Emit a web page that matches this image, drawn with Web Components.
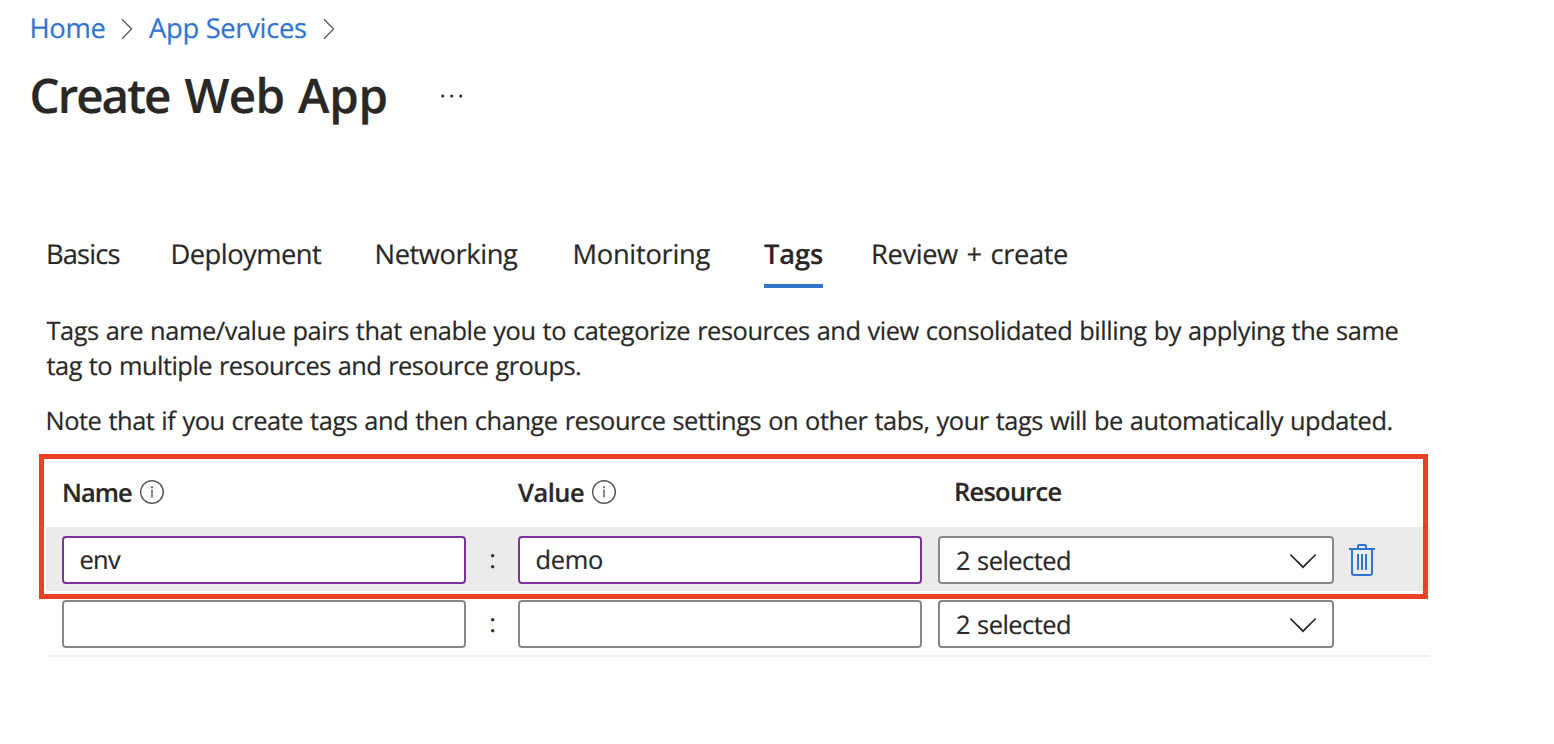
<!DOCTYPE html>
<html lang="en">
<head>
<meta charset="utf-8">
<title>Create Web App</title>
<style>
  html, body { margin: 0; background: #fff; }
  body { font-family: "Open Sans", "Noto Sans", sans-serif; color: #292827; overflow: hidden; text-rendering: geometricPrecision; -webkit-text-stroke: 0.2px currentColor; }
</style>
</head>
<body>
<web-app-page></web-app-page>

<script>
const define = (name, html, ready) => {
  const tpl = document.createElement('template');
  tpl.innerHTML = html;
  customElements.define(name, class extends HTMLElement {
    constructor() {
      super();
      this.attachShadow({ mode: 'open' }).append(tpl.content.cloneNode(true));
    }
    connectedCallback() { if (ready) ready.call(this, this.shadowRoot); }
  });
};

/* A single line of text whose tracking is adjusted to span a given width. */
const ctx = document.createElement('canvas').getContext('2d');
define('fit-text', `
  <style>
    :host { display: block; white-space: nowrap; flex: none; }
    span { display: block; }
  </style>
  <span><slot></slot></span>`,
  function (root) {
    const text = this.textContent;
    const width = parseFloat(this.getAttribute('width'));
    const word = parseFloat(this.getAttribute('word') || 0);
    const cs = getComputedStyle(this);
    ctx.font = `${cs.fontWeight} ${cs.fontSize} ${cs.fontFamily}`;
    ctx.textRendering = 'geometricPrecision';
    const m = ctx.measureText(text);
    const ink = m.actualBoundingBoxLeft + m.actualBoundingBoxRight + word * (text.split(' ').length - 1);
    this.style.width = width + 'px';
    const span = root.querySelector('span');
    span.style.wordSpacing = word + 'px';
    span.style.letterSpacing = (width - ink) / (text.length - 1) + 'px';
    span.style.marginLeft = m.actualBoundingBoxLeft + 'px';
  });

define('crumb-chevron', `
  <style>:host { display: block; width: 12px; height: 22px; } svg { display: block; }</style>
  <svg width="12" height="22" viewBox="0 0 12 22" fill="none" stroke="#5c5b5a" stroke-width="1.3"><path d="M1 1.2 10.6 11 1 20.8"/></svg>`);

define('crumb-trail', `
  <style>
    :host { display: flex; height: 36px; line-height: 36px; font-size: 27.4px; color: #3175cf; }
    crumb-chevron { margin-top: 7px; }
    .a { margin-left: 16px; margin-right: 16.5px; }
    .b { margin-left: 16.5px; }
  </style>
  <fit-text width="73">Home</fit-text><crumb-chevron class="a"></crumb-chevron>
  <fit-text width="157">App Services</fit-text><crumb-chevron class="b"></crumb-chevron>`);

define('page-title', `
  <style>
    :host { display: flex; height: 60px; }
    h1 { margin: 0; font-size: 47.5px; line-height: 60px; font-weight: 650; display: flex; gap: 14.5px; }
    svg { margin: 27px 0 0 53.5px; }
  </style>
  <h1><fit-text width="138.5">Create</fit-text> <fit-text width="99">Web</fit-text> <fit-text width="88.5">App</fit-text></h1>
  <svg width="26" height="8" viewBox="0 0 26 8" fill="#292827"><circle cx="2.7" cy="4" r="1.5"/><circle cx="11.7" cy="4" r="1.5"/><circle cx="20.7" cy="4" r="1.5"/></svg>`);

define('tab-item', `
  <style>
    :host { display: block; box-sizing: border-box; height: 53px; padding-top: 1px; font-size: 27.3px; line-height: 36px; flex: none; }
    :host([active]) { font-weight: 650; border-bottom: 4px solid #3175cf; }
  </style>
  <slot></slot>`);

define('tab-bar', `
  <style>
    :host { display: flex; height: 53px; padding-left: 2px; }
  </style>
  <tab-item style="margin-right:53px"><fit-text width="71.5">Basics</fit-text></tab-item>
  <tab-item style="margin-right:54.5px"><fit-text width="149.5">Deployment</fit-text></tab-item>
  <tab-item style="margin-right:56.5px"><fit-text width="141.5">Networking</fit-text></tab-item>
  <tab-item style="margin-right:53.5px"><fit-text width="136">Monitoring</fit-text></tab-item>
  <tab-item active style="margin-right:50px"><fit-text width="59">Tags</fit-text></tab-item>
  <tab-item><fit-text width="194" word="2">Review + create</fit-text></tab-item>`);

define('tag-notes', `
  <style>
    :host { display: block; font-size: 25.4px; line-height: 35px; }
    p { margin: 0 0 20px; }
    .n { padding-left: 1px; }
  </style>
  <p><fit-text width="1351" word="0.8">Tags are name/value pairs that enable you to categorize resources and view consolidated billing by applying the same</fit-text>
  <fit-text width="533.5" word="0.8">tag to multiple resources and resource groups.</fit-text></p>
  <p class="n"><fit-text width="1344" word="0.8">Note that if you create tags and then change resource settings on other tabs, your tags will be automatically updated.</fit-text></p>`);

define('info-icon', `
  <style>:host { display: block; width: 24px; height: 24px; } svg { display: block; }</style>
  <svg width="24" height="24" viewBox="0 0 24 24" fill="none" stroke="#555453"><circle cx="12" cy="12" r="11.3" stroke-width="1.4"/><path d="M12 9.6V17.6" stroke-width="1.4"/><circle cx="12" cy="7.2" r="1" fill="#555453" stroke="none"/></svg>`);

define('tag-head', `
  <style>
    :host { display: grid; grid-template-columns: 456px 436px 1fr; height: 68px; padding-left: 17px; font-size: 25.4px; line-height: 36px; font-weight: 650; box-sizing: border-box; }
    div { display: flex; padding-top: 16px; }
    info-icon { margin: 5px 0 0 8px; }
    .n { padding-left: 1px; }
    .r { padding-top: 15px; }
  </style>
  <div class="n"><fit-text width="68">Name</fit-text><info-icon></info-icon></div>
  <div style="margin-left:-1px"><fit-text width="66">Value</fit-text><info-icon></info-icon></div>
  <div class="r" style="margin-left:1px"><fit-text width="105.5">Resource</fit-text></div>`);

define('tag-field', `
  <style>
    :host { display: block; box-sizing: border-box; height: 48px; border: 2px solid #888786; border-radius: 4px; background: #fff; padding: 4px 0 0 16.5px; font-size: 25.4px; line-height: 36px; }
    :host([changed]) { border-color: #7d32a2; }
  </style>
  <slot></slot>`);

define('tag-select', `
  <style>
    :host { display: flex; justify-content: space-between; box-sizing: border-box; height: 48px; border: 2px solid #888786; border-radius: 4px; background: #fff; padding: 5px 15px 0 17px; font-size: 25.4px; line-height: 36px; }
    svg { margin-top: 10px; }
  </style>
  <fit-text width="113" word="1">2 selected</fit-text>
  <svg width="28" height="16" viewBox="0 0 28 16" fill="none" stroke="#292827" stroke-width="1.7"><path d="M1.3 1.5 14 14.2 26.7 1.5"/></svg>`);

define('trash-icon', `
  <style>:host { display: block; width: 26px; height: 32px; } svg { display: block; }</style>
  <svg width="26" height="32" viewBox="0 0 26 32" fill="none" stroke="#3175cf" stroke-width="2"><path d="M0 5H26M9 5V2Q9 1 10 1H16Q17 1 17 2V5M3 5V29Q3 31 5 31H21Q23 31 23 29V5M9 10V26M13 10V26M17 10V26"/></svg>`);

define('tag-row', `
  <style>
    :host { display: grid; grid-template-columns: 404px 52px 404px 396px 26px; column-gap: 0; box-sizing: border-box; height: 64px; padding: 9px 0 0 16px; }
    :host([selected]) { background: #ecebe9; }
    .colon { font-size: 25.4px; line-height: 36px; text-align: center; padding: 5px 0 0 1px; }
    tag-select { margin-left: 16px; width: 396px; }
    .del { margin: 8px 0 0 31px; }
  </style>
  <slot name="name"></slot><div class="colon">:</div><slot name="value"></slot>
  <tag-select></tag-select><div class="del"><slot name="action"></slot></div>`);

define('tag-table', `
  <style>
    :host { display: block; position: relative; width: 1384px; height: 196px; border-bottom: 2px solid #f1f1f1; }
    .callout { position: absolute; left: -7px; top: -5px; width: 1389px; height: 145px; box-sizing: border-box; border: 5px solid #ea4025; pointer-events: none; }
  </style>
  <tag-head></tag-head>
  <tag-row selected>
    <tag-field slot="name" changed><fit-text width="40.5">env</fit-text></tag-field>
    <tag-field slot="value" changed><fit-text width="65.5">demo</fit-text></tag-field>
    <trash-icon slot="action"></trash-icon>
  </tag-row>
  <tag-row><tag-field slot="name"></tag-field><tag-field slot="value"></tag-field></tag-row>
  <div class="callout"></div>`);

define('web-app-page', `
  <style>
    :host { display: block; box-sizing: border-box; width: 1554px; height: 744px; padding: 11px 0 0 46px; overflow: hidden; }
    crumb-trail, page-title { margin-left: -14.5px; }
    page-title { margin-top: 18px; }
    tab-bar { margin-top: 110px; }
    tag-notes { margin: 26px 0 0 0.5px; }
    tag-table { margin-top: 1px; }
  </style>
  <crumb-trail></crumb-trail>
  <page-title></page-title>
  <tab-bar></tab-bar>
  <tag-notes></tag-notes>
  <tag-table></tag-table>`);
</script>
</body>
</html>
